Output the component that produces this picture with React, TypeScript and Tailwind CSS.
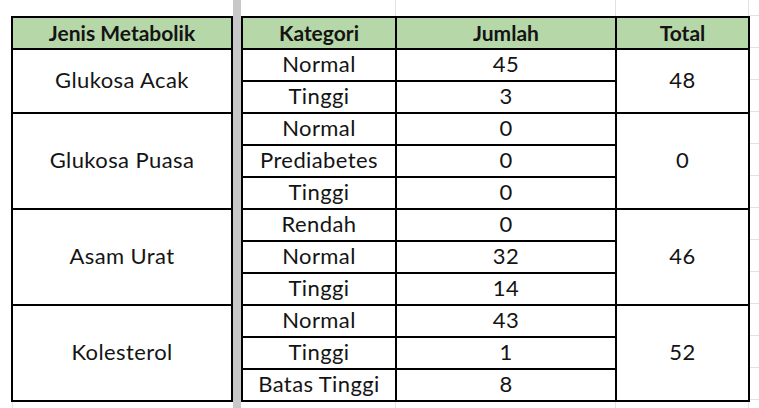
import React from "react";

const groups = [
  { name: "Glukosa Acak", total: "48", rows: [["Normal", "45"], ["Tinggi", "3"]] },
  { name: "Glukosa Puasa", total: "0", rows: [["Normal", "0"], ["Prediabetes", "0"], ["Tinggi", "0"]] },
  { name: "Asam Urat", total: "46", rows: [["Rendah", "0"], ["Normal", "32"], ["Tinggi", "14"]] },
  { name: "Kolesterol", total: "52", rows: [["Normal", "43"], ["Tinggi", "1"], ["Batas Tinggi", "8"]] },
];

const cell =
  "border-r-2 border-b-2 border-black flex items-center justify-center leading-none pb-[2px] whitespace-nowrap";
const head = "bg-[#b6d7a8] font-bold text-[21px] tracking-normal";

export default function App() {
  const font = { fontFamily: "Lato, 'Noto Sans', sans-serif" };
  return (
    <div
      className="w-[759px] h-[408px] bg-white flex overflow-hidden text-[22px] tracking-[0.4px] text-[#141414]"
      style={font}
    >
      {/* column A */}
      <div className="w-[11px] shrink-0 flex flex-col">
        <div className="h-[16px]" />
        <div className="flex-1" />
      </div>
      {/* left table column */}
      <div className="w-[222px] shrink-0 flex flex-col">
        <div className="h-[16px]" />
        <div className="border-l-2 border-t-2 border-black flex flex-col">
          <div className={`${cell} ${head} h-[32px]`}>Jenis Metabolik</div>
          {groups.map((g) => (
            <div key={g.name} className={cell} style={{ height: g.rows.length * 32 }}>
              {g.name}
            </div>
          ))}
        </div>
        <div className="flex-1 border-l border-[#e2e2e2] ml-[1px]" />
      </div>
      {/* frozen bar */}
      <div className="w-[8px] shrink-0 bg-[#c8c8c8]" />
      {/* right table */}
      <div className="w-[509px] shrink-0 flex flex-col">
        <div className="h-[16px] flex">
          <div className="w-[155px] border-r border-[#e2e2e2]" />
          <div className="w-[220px] border-r border-[#e2e2e2]" />
          <div className="w-[133px] border-r border-[#e2e2e2]" />
        </div>
        <div className="border-l-2 border-t-2 border-black grid grid-cols-[154px_220px_133px] auto-rows-[32px]">
          <div className={`${cell} ${head}`}>Kategori</div>
          <div className={`${cell} ${head}`}>Jumlah</div>
          <div className={`${cell} ${head}`}>Total</div>
          {groups.map((g) =>
            g.rows.map((r, i) => (
              <React.Fragment key={g.name + i}>
                <div className={cell} style={{ gridColumn: 1 }}>{r[0]}</div>
                <div className={cell} style={{ gridColumn: 2 }}>{r[1]}</div>
                {i === 0 && (
                  <div className={cell} style={{ gridColumn: 3, gridRow: `span ${g.rows.length}` }}>
                    {g.total}
                  </div>
                )}
              </React.Fragment>
            ))
          )}
        </div>
        <div className="flex-1 flex">
          <div className="w-[155px] border-r border-[#e2e2e2]" />
          <div className="w-[220px] border-r border-[#e2e2e2]" />
          <div className="w-[133px] border-r border-[#e2e2e2]" />
        </div>
      </div>
      {/* right gridlines */}
      <div className="flex-1 flex flex-col">
        <div className="h-[16px] shrink-0 border-b border-[#e2e2e2]" />
        {Array.from({ length: 12 }).map((_, i) => (
          <div key={i} className="h-[32px] shrink-0 border-b border-[#e2e2e2]" />
        ))}
      </div>
    </div>
  );
}
